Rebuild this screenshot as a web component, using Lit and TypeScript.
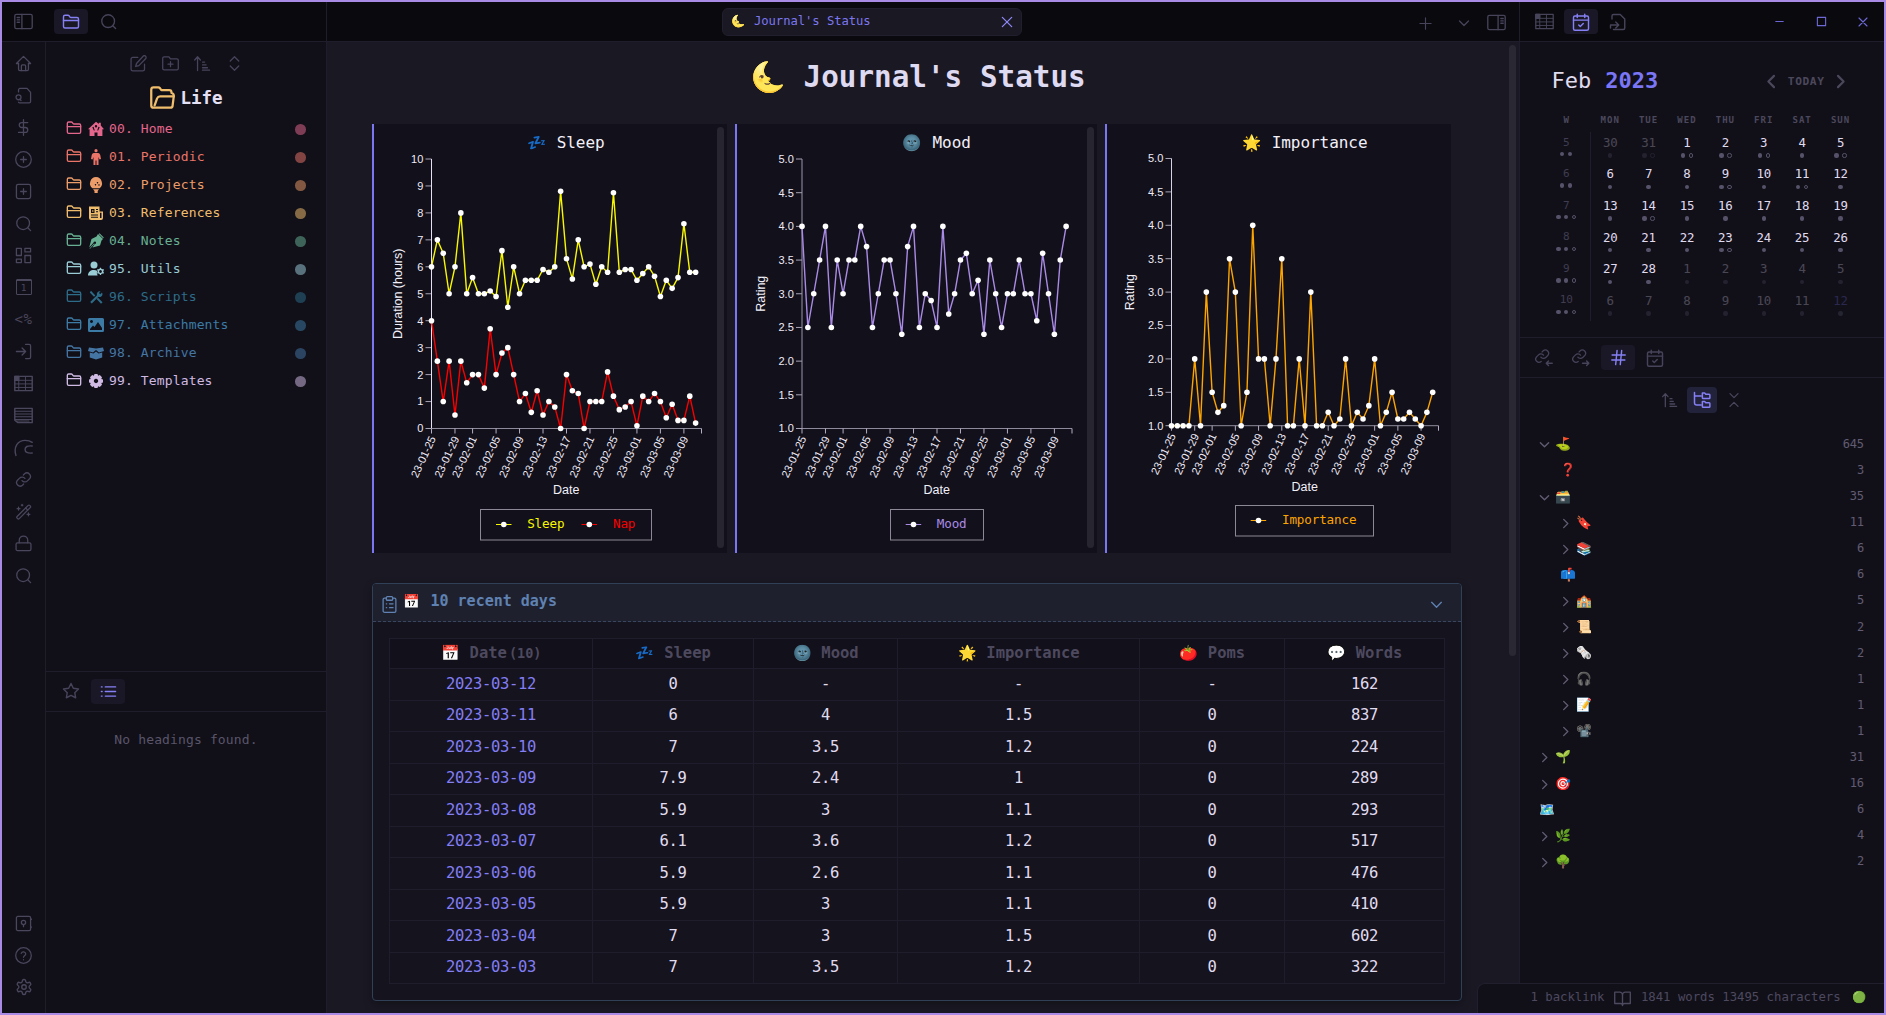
import { LitElement, html, svg, css, nothing } from "lit";
import { customElement, property } from "lit/decorators.js";
import { styleMap } from "lit/directives/style-map.js";
import { classMap } from "lit/directives/class-map.js";

const ICONS: Record<string, unknown> = {
  panelLeft: svg`<rect x="1" y="3" width="22" height="18" rx="2"/><path d="M10 3v18M4 7h3M4 10h3M4 13h3"/>`,
  panelRight: svg`<rect x="1" y="3" width="22" height="18" rx="2"/><path d="M14 3v18M17.5 7h3M17.5 10h3M17.5 13h3"/>`,
  folder: svg`<path d="M4 20h16a2 2 0 0 0 2-2V8a2 2 0 0 0-2-2h-7.93a2 2 0 0 1-1.66-.9l-.82-1.2A2 2 0 0 0 7.93 3H4a2 2 0 0 0-2 2v13c0 1.1.9 2 2 2Z"/><path d="M2 10h20"/>`,
  folderOpen: svg`<path d="M5 19l2.2-6.2A3 3 0 0 1 10 11h12"/><path d="M4 21a2 2 0 0 1-2-2V5a2 2 0 0 1 2-2h4.2a2 2 0 0 1 1.6.8L11 5.500h7a2 2 0 0 1 2 2V8a2.500 2.500 0 0 1 2 3l-1 8a2 2 0 0 1-2 2Z"/>`,
  search: svg`<circle cx="11.500" cy="11.500" r="9"/><path d="m22 22-4-4"/>`,
  home: svg`<path d="M5 12H2L12 2l10 10h-3"/><path d="M5 12v8a2 2 0 0 0 2 2h10a2 2 0 0 0 2-2v-8"/><path d="M9 22v-6.500a1.500 1.500 0 0 1 1.500-1.500h3a1.500 1.500 0 0 1 1.500 1.500V22"/>`,
  fileSearch: svg`<path d="M5 21.500a2 2 0 0 0 1.700 1H20a2 2 0 0 0 2-2V7.500l-5-5.500H7a2 2 0 0 0-2 2v3"/><circle cx="5" cy="14.500" r="3.500"/><path d="m8.500 19-1.700-1.700"/>`,
  dollar: svg`<path d="M12 1v22"/><path d="M18 5H9.500a3.500 3.500 0 0 0 0 7h5a3.500 3.500 0 0 1 0 7H5"/>`,
  plusCircle: svg`<circle cx="12" cy="12" r="11"/><path d="M12 8v8M8 12h8"/>`,
  plusSquare: svg`<rect x="2" y="2" width="20" height="20" rx="2.500"/><path d="M12 8v8M8 12h8"/>`,
  dashboard: svg`<rect x="2" y="2" width="7" height="10"/><rect x="14" y="2" width="8" height="5"/><rect x="14" y="12" width="8" height="10"/><rect x="2" y="17" width="7" height="5"/>`,
  login: svg`<path d="M15 2h5a2 2 0 0 1 2 2v16a2 2 0 0 1-2 2h-5"/><path d="m10 17 5-5-5-5M15 12H2"/>`,
  table: svg`<rect x="1" y="3" width="22" height="18"/><path d="M1 8h22M1 12.500h22M1 17h22M6 3v18M14.500 3v18" stroke-width="1.200"/><path d="M1 3h5v5H1z" fill="currentColor"/>`,
  lines: svg`<path d="M1 3h22v18H5l-4-3z"/><path d="M1 6.500h22M1 10h22M1 13.500h22M1 17h22M3 19h16" stroke-width="1.300"/>`,
  curve: svg`<path d="M2.500 22C-1 11 5 3 14 3c4 0 7 1 9 2.500"/><path d="M23 10c-6-.5-9 1-9 4.500S17 19.500 23 19"/>`,
  link: svg`<path d="M10 13.500a5 5 0 0 0 7.500.5l3-3a5 5 0 0 0-7-7.100l-1.700 1.700"/><path d="M14 10.500a5 5 0 0 0-7.500-.5l-3 3a5 5 0 0 0 7 7.100l1.700-1.700"/>`,
  wand: svg`<path d="M3 19 18.500 3.500a1.700 1.700 0 0 1 2.400 0l.6.6a1.700 1.700 0 0 1 0 2.400L6 22a1.700 1.700 0 0 1-2.400 0l-.6-.6a1.700 1.700 0 0 1 0-2.400Z"/><path d="m15 7 3 3M5 6v4M3 8h4M19 14v4M17 16h4M10 2v2M9 3h2"/>`,
  lock: svg`<rect x="1.500" y="11" width="21" height="11" rx="2"/><path d="M6 11V7.500a6 6 0 0 1 12 0V11"/>`,
  vault: svg`<rect x="2" y="2" width="20" height="20" rx="2"/><circle cx="12" cy="10.500" r="3"/><path d="M12 13.500v3M22 6h1.500M22 17h1.500"/>`,
  help: svg`<circle cx="12" cy="12" r="11"/><path d="M8.800 9a3.300 3.300 0 0 1 6.400 1c0 2.200-3.200 2.500-3.200 4.500M12 18h.01"/>`,
  gear: svg`<path d="M12.220 2h-.44a2 2 0 0 0-2 2v.18a2 2 0 0 1-1 1.730l-.43.25a2 2 0 0 1-2 0l-.15-.08a2 2 0 0 0-2.730.73l-.22.38a2 2 0 0 0 .73 2.730l.15.1a2 2 0 0 1 1 1.720v.51a2 2 0 0 1-1 1.740l-.15.09a2 2 0 0 0-.73 2.730l.22.38a2 2 0 0 0 2.730.73l.15-.08a2 2 0 0 1 2 0l.43.25a2 2 0 0 1 1 1.730V20a2 2 0 0 0 2 2h.44a2 2 0 0 0 2-2v-.18a2 2 0 0 1 1-1.730l.43-.25a2 2 0 0 1 2 0l.15.08a2 2 0 0 0 2.730-.73l.22-.39a2 2 0 0 0-.73-2.730l-.15-.08a2 2 0 0 1-1-1.740v-.5a2 2 0 0 1 1-1.740l.15-.09a2 2 0 0 0 .73-2.730l-.22-.38a2 2 0 0 0-2.730-.73l-.15.08a2 2 0 0 1-2 0l-.43-.25a2 2 0 0 1-1-1.730V4a2 2 0 0 0-2-2z"/><circle cx="12" cy="12" r="3"/>`,
  edit: svg`<path d="M11 3.500H4a2.500 2.500 0 0 0-2.500 2.500v14A2.500 2.500 0 0 0 4 22.500h14a2.500 2.500 0 0 0 2.500-2.500v-7"/><path d="M18.500 1.700a2.300 2.300 0 0 1 3.500 3.500L12.500 15 8 16.200 9.200 12Z"/>`,
  folderPlus: svg`<path d="M3 21h18a2 2 0 0 0 2-2V7.500a2 2 0 0 0-2-2h-9L9.800 2.500H3a2 2 0 0 0-2 2V19a2 2 0 0 0 2 2Z"/><path d="M12 9.500v7M8.500 13h7"/>`,
  sort: svg`<path d="M5 22V3M1 7l4-4.500L9 7M12 10h3M12 14h5M12 18h7M12 21.500h10"/>`,
  expand: svg`<path d="m6 8.500 6-6 6 6M6 15.500l6 6 6-6"/>`,
  collapse: svg`<path d="m6 2.500 6 6 6-6M6 21.500l6-6 6 6"/>`,
  star: svg`<path d="m12 2 3.100 6.300 6.900 1-5 4.900 1.200 6.800-6.200-3.200L5.800 21 7 14.200l-5-4.900 6.900-1Z"/>`,
  list: svg`<path d="M7.500 5.500H22M7.500 12H22M7.500 18.500H22M2 5.500h1M2 12h1M2 18.500h1"/>`,
  calendarCheck: svg`<rect x="2" y="4" width="20" height="19" rx="2"/><path d="M2 9.500h20M7 1.500V6M17 1.500V6M9 16l2 2 4-4"/>`,
  fileOut: svg`<path d="M4 8V4a2 2 0 0 1 2-2h9l6 6v12a2 2 0 0 1-2 2H6"/><path d="M2 16h11M9 12l4 4-4 4M2 16v4"/>`,
  hash: svg`<path d="M3 8.500h18.500M2.500 15.500H21M10 2 8 22M16.500 2l-2 20"/>`,
  linkIn: svg`<g transform="translate(-1 -1) scale(.88)"><path d="M10 13.500a5 5 0 0 0 7.500.5l3-3a5 5 0 0 0-7-7.100l-1.700 1.700"/><path d="M14 10.500a5 5 0 0 0-7.500-.5l-3 3a5 5 0 0 0 7 7.100"/></g><path d="M23 19h-8M18 16l-3 3 3 3"/>`,
  linkOut: svg`<g transform="translate(-1 -1) scale(.88)"><path d="M10 13.500a5 5 0 0 0 7.500.5l3-3a5 5 0 0 0-7-7.100l-1.700 1.700"/><path d="M14 10.500a5 5 0 0 0-7.500-.5l-3 3a5 5 0 0 0 7 7.100"/></g><path d="M14 19h8.500M19.500 16l3 3-3 3"/>`,
  tree: svg`<path d="M2 2v13.500a3 3 0 0 0 3 3h6M2 6.500h9"/><path d="M12.500 2.500h3l1.500 1.700h4.500a1 1 0 0 1 1 1V9a1 1 0 0 1-1 1h-8a1 1 0 0 1-1-1ZM12.500 14h3l1.500 1.700h4.500a1 1 0 0 1 1 1v4a1 1 0 0 1-1 1h-8a1 1 0 0 1-1-1Z"/>`,
  book: svg`<path d="M1 3h7a4 4 0 0 1 4 4v15a3 3 0 0 0-3-3H1zM23 3h-7a4 4 0 0 0-4 4v15a3 3 0 0 1 3-3h8z"/>`,
  clipboard: svg`<rect x="7.500" y="1" width="9" height="5" rx="1.500"/><path d="M16.500 3H19a2 2 0 0 1 2 2v16a2 2 0 0 1-2 2H5a2 2 0 0 1-2-2V5a2 2 0 0 1 2-2h2.500M12 11h5M12 16.500h5M7.500 11h.5M7.500 16.500h.5"/>`,
  plus: svg`<path d="M12 3v18M3 12h18"/>`,
  x: svg`<path d="M4 4l16 16M20 4 4 20"/>`,
  minus: svg`<path d="M2 12h20"/>`,
  square: svg`<path d="M3 3h18v18H3z"/>`,
  down: svg`<path d="m3 8 9 9 9-9"/>`,
  right: svg`<path d="m8 3 9 9-9 9"/>`,
  left: svg`<path d="m16 3-9 9 9 9"/>`,
};

function icon(name: string, size = 18, stroke = 1.9) {
  return html`<svg width=${size} height=${size} viewBox="0 0 24 24" fill="none" stroke="currentColor"
    stroke-width=${stroke} stroke-linecap="round" stroke-linejoin="round">${ICONS[name]}</svg>`;
}

const SOLID: Record<string, unknown> = {
  house: svg`<path fill-rule="evenodd" d="M8 .8 10.800 3V1.800h2v2.800L16 8.200h-1.600V15H9.500v-3.500h-3V15H1.600V8.200H0ZM8 4a1.200 1.200 0 1 0 0 2.400A1.200 1.200 0 0 0 8 4ZM4.300 6.200l1.500 3.300h1L5.600 5.800ZM11.700 6.200l-1.500 3.300h-1l1.200-3.700Z"/>`,
  person: svg`<circle cx="8" cy="1.700" r="1.600"/><path d="M6 4h4c1.500 0 2 1 2.300 2.300L13 10l-1.500.5L10.500 8v8h-2v-4.500h-1V16h-2V8l-1 2.500L3 10l.7-3.700C4 5 4.500 4 6 4Z"/>`,
  bulb: svg`<path fill-rule="evenodd" d="M8 0a6.300 6.300 0 0 1 3.500 11.300H4.500A6.300 6.300 0 0 1 8 0Zm1.500 5a.7.7 0 1 0 .01 0Zm-2 2a.7.7 0 1 0 .01 0Zm3.500.2a.7.7 0 1 0 .01 0Z"/><path d="M5 12.200h6L9.700 14v2H6.500v-2Z"/>`,
  news: svg`<path fill-rule="evenodd" d="M1 1.500h10.500V6.500H15V13a2 2 0 0 1-2 2H3a2 2 0 0 1-2-2Zm2 2.500v4h3.500V4Zm1.200 1.200h1.200v1.600H4.200ZM8 4v1h2V4Zm0 2.200v1h2v-1ZM3 9.500v1h7v-1Zm0 2.200v1h7v-1Zm9-4V13h1.500V7.700Z"/>`,
  pen: svg`<path fill-rule="evenodd" d="m10 1 5 5-1.500 1.500-1.500 5L4.500 14.500 6.800 11A1.300 1.300 0 1 0 5.500 9.800L1.200 14.500 3.500 6 8.500 3.500ZM11.500.2 15.800 4.500l-.7.7L10.800.9Z"/><path d="m1.500 15.500 4.500-5 .6.6-4.600 4.700Z"/>`,
  userGear: svg`<circle cx="6" cy="4" r="3.500"/><path d="M0 14.500C0 11 2.500 9 6 9c1.200 0 2.500.3 3.400.9a4 4 0 0 0 .2 4.600Z"/><path fill-rule="evenodd" d="m12 6.800 1 0 .3 1 1 .5 1-.3.7 1-.7.9v.9l.7.9-.7 1-1-.2-1 .5-.3 1h-1l-.4-1-.9-.5-1 .2-.6-1 .7-.9v-.9l-.7-.9.6-1 1 .3.9-.5Zm.5 2.300a1.400 1.400 0 1 0 .01 0Z"/>`,
  tools: svg`<path d="M3 1.800 7.300 6.600 6 7.800 1.800 3.400ZM10 8.800l4.500 4.400-1.500 1.500-4.400-4.600ZM14.500 5a3 3 0 0 1-4 2.800L3.800 14.600 2.200 13 9 6.300a3 3 0 0 1 3.600-4L11 4l1.200 1.200L14 3.600Z"/>`,
  image: svg`<path fill-rule="evenodd" d="M1.500 1h13A1.500 1.500 0 0 1 16 2.500v11a1.500 1.500 0 0 1-1.500 1.500h-13A1.500 1.500 0 0 1 0 13.500v-11A1.500 1.500 0 0 1 1.500 1ZM3.500 3a1.500 1.500 0 1 0 .01 0ZM2 13h12v-2l-4-6-3.500 5L5 8.500 2 12Z"/>`,
  box: svg`<path d="M1 2.500 8 3.500l7-1L16 6l-5 1.500L8 5 5 7.500 0 6ZM1.800 7.500 5.500 8.500 8 6.500l2.500 2 3.700-1v5L8 14.500l-6.200-2Z"/>`,
  cog: svg`<path fill-rule="evenodd" d="m6.500 1h3l.6 1.700 1.700-.7 2.200 2.200-.7 1.700 1.700.6v3l-1.700.6.7 1.700-2.200 2.200-1.700-.7-.6 1.700h-3l-.6-1.700-1.700.7L2 11.800l.7-1.700L1 9.500v-3l1.700-.6L2 4.200 4.200 2l1.700.7ZM8 5.800a2.200 2.200 0 1 0 .01 0Z"/>`,
};

interface Series { name: string; color: string; values: number[]; lineX: number; textX: number; }
interface ChartSpec {
  card: [number, number]; emoji: string; emojiX: number; title: string; titleX: number;
  x0: number; x1: number; yTop: number; yBase: number; min: number; max: number; step: number; digits: number;
  label: string; labelX: number; dateX: number; dateY: number; box: [number, number, number, number];
  series: Series[]; axis: string;
}

const DATES: [number, string][] = [
  [0, "23-01-25"], [4, "23-01-29"], [7, "23-02-01"], [11, "23-02-05"], [15, "23-02-09"], [19, "23-02-13"],
  [23, "23-02-17"], [27, "23-02-21"], [31, "23-02-25"], [35, "23-03-01"], [39, "23-03-05"], [43, "23-03-09"],
];

const CHARTS: ChartSpec[] = [
  {
    card: [374, 343], emoji: "💤", emojiX: 537, title: "Sleep", titleX: 556.7,
    x0: 431.5, x1: 701.5, yTop: 159, yBase: 428.5, min: 0, max: 10, step: 1, digits: 0,
    label: "Duration (hours)", labelX: 402, dateX: 566.3, dateY: 494, box: [480.5, 509.5, 171, 30.5], axis: "#e6e0f5",
    series: [
      { name: "Sleep", color: "#f8f800", lineX: 496, textX: 527.2, values: [6, 7, 6.5, 5, 6, 8, 5, 5.6, 5, 5, 5.1, 4.9, 6.6, 4.5, 6, 5, 5.5, 5.5, 5.5, 5.9, 5.8, 6, 8.8, 6.3, 5.55, 7, 6, 6.1, 5.35, 6, 5.8, 8.75, 5.8, 5.9, 5.9, 5.5, 5.75, 6, 5.65, 4.9, 5.5, 5.2, 5.6, 7.6, 5.8, 5.8] },
      { name: "Nap", color: "#f80000", lineX: 581.5, textX: 613, values: [4, 2.5, 1, 2.5, 0.5, 2.5, 1.7, 2, 2, 1.5, 3.7, 2, 2.8, 3, 2, 1, 1.3, 0.6, 1.4, 0.5, 1, 0.8, 0, 2, 1.4, 1.3, 0, 1, 1, 1, 2.1, 1.2, 0.7, 0.8, 1, 0.1, 1.2, 1, 1.3, 1, 0.4, 0.9, 0.3, 0.3, 1.2, 0.2] },
    ],
  },
  {
    card: [737, 350], emoji: "🌚", emojiX: 912, title: "Mood", titleX: 932.5,
    x0: 802, x1: 1072, yTop: 159, yBase: 428.5, min: 1, max: 5, step: 0.5, digits: 1,
    label: "Rating", labelX: 765, dateX: 936.7, dateY: 494, box: [890.5, 509.5, 93, 30.5], axis: "#9d95ad",
    series: [
      { name: "Mood", color: "#a98be6", lineX: 905.7, textX: 936.8, values: [4, 2.5, 3, 3.5, 4, 2.5, 3.5, 3, 3.5, 3.5, 4, 3.7, 2.5, 3, 3.5, 3.5, 3, 2.4, 3.7, 4, 2.5, 3, 2.9, 2.5, 4, 2.7, 3, 3.5, 3.6, 3, 3.2, 2.4, 3.5, 3, 2.5, 3, 3, 3.5, 3, 3, 2.6, 3.6, 3, 2.4, 3.5, 4] },
    ],
  },
  {
    card: [1107, 344], emoji: "🌟", emojiX: 1252, title: "Importance", titleX: 1271.7,
    x0: 1171.5, x1: 1438.5, yTop: 158.5, yBase: 425.7, min: 1, max: 5, step: 0.5, digits: 1,
    label: "Rating", labelX: 1134, dateX: 1304.7, dateY: 491, box: [1235.5, 505.5, 138, 30.5], axis: "#d8d2e6",
    series: [
      { name: "Importance", color: "#fca400", lineX: 1250.7, textX: 1282, values: [1, 1, 1, 1, 2, 1, 3, 1.5, 1.2, 1.3, 3.5, 3, 1, 1.5, 4, 2, 2, 1, 2, 3.5, 1, 1, 2, 1, 3, 1, 1, 1.2, 1, 1.1, 2, 1, 1.2, 1.1, 1.3, 2, 1, 1.2, 1.5, 1.1, 1.1, 1.2, 1.1, 1, 1.2, 1.5] },
    ],
  },
];

@customElement("line-chart")
class LineChart extends LitElement {
  @property({ attribute: false }) spec!: ChartSpec;

  static styles = css`
    :host { display: block; height: 429px; }
    svg { display: block; }
    .title { font: 16px "DejaVu Sans Mono", monospace; fill: #f3f0fa; letter-spacing: -0.05px; }
    .emoji { font: 15.5px "Noto Color Emoji", sans-serif; text-anchor: middle; }
    .legend { font: 12.6px "DejaVu Sans Mono", monospace; letter-spacing: -0.15px; }
    .num { font: 11px "Liberation Sans", Arial, sans-serif; fill: #efebf8; text-anchor: end; }
    .label { font: 12.5px "Liberation Sans", Arial, sans-serif; fill: #f3f0fa; text-anchor: middle; }
    .box { fill: none; stroke: #8c8896; stroke-width: 1; }
  `;

  render() {
    const s = this.spec;
    const x = (i: number) => s.x0 + ((s.x1 - s.x0) * i) / 46;
    const y = (v: number) => s.yBase - ((s.yBase - s.yTop) * (v - s.min)) / (s.max - s.min);
    const count = Math.round((s.max - s.min) / s.step);
    const ticks = Array.from({ length: count + 1 }, (_, i) => s.min + i * s.step);
    const dotY = s.box[1] + 15;
    return html`<svg width=${s.card[1]} height="429" viewBox="${s.card[0]} 124 ${s.card[1]} 429">
      <text class="emoji" x=${s.emojiX} y="148">${s.emoji}</text>
      <text class="title" x=${s.titleX} y="148">${s.title}</text>
      ${ticks.map((t) => svg`
        <path d="M${s.x0 - 6} ${y(t)}H${s.x0}" stroke="#a9a3b6"/>
        <text class="num" x=${s.x0 - 8.2} y=${y(t) + 3.9}>${t.toFixed(s.digits)}</text>`)}
      <path d="M${s.x0} ${s.yTop}V${s.yBase}" stroke=${s.axis}/>
      <path d="M${s.x0} ${s.yBase}H${s.x1}" stroke="#8f899c"/>
      ${[...DATES.map((d) => d[0]), 46].map((i) => svg`<path d="M${x(i)} ${s.yBase}v5" stroke="#b5aec4"/>`)}
      ${DATES.map(([i, d]) => svg`<text class="num" transform="translate(${x(i) + 4.6} ${s.yBase + 10}) rotate(-65)">${d}</text>`)}
      <text class="label" transform="translate(${s.labelX} ${(s.yTop + s.yBase) / 2}) rotate(-90)">${s.label}</text>
      <text class="label" x=${s.dateX} y=${s.dateY}>Date</text>
      ${s.series.map((r) => svg`
        <polyline points=${r.values.map((v, i) => `${x(i)},${y(v)}`).join(" ")} fill="none" stroke=${r.color} stroke-width="1.4"/>
        ${r.values.map((v, i) => svg`<circle cx=${x(i)} cy=${y(v)} r="2.8" fill="#fff"/>`)}`)}
      <rect class="box" x=${s.box[0]} y=${s.box[1]} width=${s.box[2]} height=${s.box[3]}/>
      ${s.series.map((r) => svg`
        <path d="M${r.lineX} ${dotY}h15.500" stroke=${r.color}/>
        <circle cx=${r.lineX + 7.8} cy=${dotY} r="2.800" fill="#fff"/>
        <text class="legend" x=${r.textX} y=${dotY + 3.6} fill=${r.color}>${r.name}</text>`)}
    </svg>`;
  }
}

const TREE = [
  ["house", "00. Home", "#e5668c"], ["person", "01. Periodic", "#ea7468"], ["bulb", "02. Projects", "#ec9c68"],
  ["news", "03. References", "#f0bd6d"], ["pen", "04. Notes", "#68b093"], ["userGear", "95. Utils", "#9accd6"],
  ["tools", "96. Scripts", "#2d6c89"], ["image", "97. Attachments", "#3c7ba5"], ["box", "98. Archive", "#4475a3"],
  ["cog", "99. Templates", "#cfbae3"],
];

const RIBBON = ["home", "fileSearch", "dollar", "plusCircle", "plusSquare", "search", "dashboard", "day", "tpl", "login", "table", "lines", "curve", "link", "wand", "lock", "search"];

const WEEKS: { n: number; dots: string; days: [number, string][] }[] = [
  { n: 5, dots: "ff", days: [[30, "f"], [31, "fo"], [1, "fo"], [2, "fo"], [3, "fo"], [4, "f"], [5, "fo"]] },
  { n: 6, dots: "ff", days: [[6, "f"], [7, "f"], [8, "f"], [9, "fo"], [10, "f"], [11, "fo"], [12, "f"]] },
  { n: 7, dots: "ffo", days: [[13, "f"], [14, "fo"], [15, "f"], [16, "f"], [17, "f"], [18, "f"], [19, "f"]] },
  { n: 8, dots: "ffo", days: [[20, "f"], [21, "f"], [22, "f"], [23, "fo"], [24, "f"], [25, "f"], [26, "f"]] },
  { n: 9, dots: "ffo", days: [[27, "f"], [28, "f"], [1, "f"], [2, "f"], [3, "f"], [4, "f"], [5, "f"]] },
  { n: 10, dots: "ffo", days: [[6, "f"], [7, "f"], [8, "f"], [9, "f"], [10, "f"], [11, "f"], [12, "f"]] },
];

// [level, chevron, emoji, count]
const TAGS: [number, string, string, number][] = [
  [0, "down", "⛳", 645], [1, "", "❓", 3], [0, "down", "🗃️", 35], [1, "right", "🔖", 11], [1, "right", "📚", 6],
  [1, "", "📫", 6], [1, "right", "🏫", 5], [1, "right", "📜", 2], [1, "right", "🗞️", 2], [1, "right", "🎧", 1],
  [1, "right", "📝", 1], [1, "right", "📽️", 1], [0, "right", "🌱", 31], [0, "right", "🎯", 16], [0, "", "🗺️", 6],
  [0, "right", "🌿", 4], [0, "right", "🌳", 2],
];

const ROWS = [
  ["2023-03-12", "0", "-", "-", "-", "162"], ["2023-03-11", "6", "4", "1.5", "0", "837"],
  ["2023-03-10", "7", "3.5", "1.2", "0", "224"], ["2023-03-09", "7.9", "2.4", "1", "0", "289"],
  ["2023-03-08", "5.9", "3", "1.1", "0", "293"], ["2023-03-07", "6.1", "3.6", "1.2", "0", "517"],
  ["2023-03-06", "5.9", "2.6", "1.1", "0", "476"], ["2023-03-05", "5.9", "3", "1.1", "0", "410"],
  ["2023-03-04", "7", "3", "1.5", "0", "602"], ["2023-03-03", "7", "3.5", "1.2", "0", "322"],
];
const HEADS = [["📅", "Date"], ["💤", "Sleep"], ["🌚", "Mood"], ["🌟", "Importance"], ["🍅", "Poms"], ["💬", "Words"]];

@customElement("app-root")
class AppRoot extends LitElement {
  static styles = css`
    :host { display: block; }
    * { box-sizing: border-box; }
    svg { display: block; flex: none; }
    .window {
      position: relative; width: 1886px; height: 1015px; overflow: hidden; border: 2px solid #a98be6;
      display: grid; grid-template-columns: 325px 1192px 365px; grid-template-rows: 40px 971px;
      background: #1a1823; color: #e0dcf0; white-space: nowrap;
      font-family: "DejaVu Sans Mono", "Liberation Mono", monospace;
    }
    .emoji { font-family: "Noto Color Emoji", sans-serif; display: inline-flex; justify-content: center; letter-spacing: 0; flex: none; font-weight: 400; }
    .head { background: #09090e; border-bottom: 1px solid #1f1d2c; display: flex; align-items: flex-start; color: #47435a; }
    .head.l { border-right: 1px solid #1f1d2c; padding: 7px 0 0 4.500px; gap: 3px; }
    .head.r { border-left: 1px solid #1f1d2c; padding: 7px 0 0 7px; gap: 3px; }
    .cell { width: 34px; height: 25px; border-radius: 4px; display: flex; align-items: center; justify-content: center; flex: none; }
    .cell.on { background: #1a1827; color: #8580f5; }
    .l .first { margin-right: 10.500px; }
    .wins { display: flex; margin-left: auto; color: #6f69d8; height: 25px; align-items: center; }
    .win { width: 42px; display: flex; justify-content: center; }
    .head.m { padding: 6px 0 0 395px; }
    .tab { width: 300px; height: 28px; border-radius: 6px; background: #1a1823; border: 1px solid #211f2d; display: flex; align-items: center; padding: 0 7px 2px 9px; color: #7c77ee; font-size: 12.2px; letter-spacing: -0.05px; line-height: 24px; }
    .tab .emoji { width: 14px; font-size: 11.5px; margin-right: 8px; }
    .tab .x { margin-left: auto; margin-top: 2px; color: #8d88f5; }
    .mh { display: flex; align-items: center; height: 30px; margin-left: 396px; margin-top: 0; gap: 25px; }
    .mh svg:last-child { margin: -2px 0 0 -8px; }
    .body { display: flex; }
    .ribbon { width: 44px; background: #111019; border-right: 1px solid #1f1d2c; color: #4a465c; display: flex; flex-direction: column; padding: 5px 0 10px; }
    .rb { height: 32px; display: flex; align-items: center; justify-content: center; }
    .tpl { font-size: 14px; letter-spacing: .6px; }
    .day { width: 16px; height: 16px; border: 1.2px solid currentColor; border-radius: 1px; font-size: 9.500px; display: flex; align-items: center; justify-content: center; box-shadow: inset 0 2px 0 -1px currentColor; }
    .push { margin-top: auto; }
    .side { width: 281px; background: #111019; border-right: 1px solid #1f1d2c; }
    .tools { display: flex; justify-content: center; color: #47435a; height: 42px; align-items: center; }
    .tools .t { width: 32px; display: flex; justify-content: center; }
    .life { display: flex; align-items: center; height: 26px; margin: 0 0 4px 103px; color: #f0bd6d; }
    .life b { font-size: 17.5px; color: #e4e0f5; margin-left: 4.500px; margin-top: 1px; letter-spacing: 0; }
    .row { display: flex; align-items: center; height: 28px; padding: 0 20px 0 20px; font-size: 13px; letter-spacing: .14px; }
    .row .solid { margin: 1px 5px 0 6px; }
    .dot { width: 10.6px; height: 10.6px; border-radius: 50%; margin-left: auto; margin-top: 3px; opacity: .52; }
    .filetop { height: 629.600px; border-bottom: 1px solid #1f1d2c; }
    .tabs { height: 40px; display: flex; align-items: center; gap: 3px; padding-left: 8px; color: #47435a; border-bottom: 1px solid #1f1d2c; }
    .right .tabs { padding-left: 7px; }
    .none { text-align: center; color: #5a5569; font-size: 13px; letter-spacing: .14px; padding: 19px 0 0 0; line-height: 18px; }

    .main { padding-left: 45px; }
    .title { display: flex; align-items: center; height: 82px; padding: 0 0 12px 378.500px; font-size: 29.3px; font-weight: 700; line-height: 70px; color: #dedaf2; }
    .title .emoji { width: 36px; font-size: 29px; line-height: 66px; margin-right: 17px; }
    .charts { display: grid; grid-template-columns: 355px 362px 346px; column-gap: 8px; }
    .card { background: #12101a; border-left: 2px solid #7b76f2; height: 429px; display: flex; }
    .bar { width: 7px; height: 421px; margin-top: 3px; border-radius: 4px; background: #272530; }
    .callout { margin-top: 30px; width: 1090px; height: 418px; border: 1px solid #304057; border-radius: 4px; background: #15131e; box-shadow: 0 3px 8px rgba(0,0,0,.3); overflow: hidden; }
    .chead { height: 38px; background: #1e202e; border-bottom: 1px dashed #3a4660; display: flex; align-items: center; padding: 0 18.500px 0 8px; color: #5f82b2; }
    .chead b { font-size: 15px; line-height: 20px; margin: -4px 0 0 10.500px; }
    .chead .emoji { width: 16px; font-size: 13.5px; margin: -4px 0 0 6px; }
    .chead .clip { margin-top: 3px; }
    .chead .chev { margin-left: auto; margin-top: 3px; }
    .table { margin: 16px 0 0 16px; width: 1056px; border-left: 1px solid #1f1d2c; border-top: 1px solid #1f1d2c; display: grid; grid-template-columns: 203px 161px 144px 242px 145px 160px; grid-template-rows: 30px repeat(10, 31.5px); }
    .td { border-right: 1px solid #1f1d2c; border-bottom: 1px solid #1f1d2c; display: flex; align-items: center; justify-content: center; font-size: 15.500px; letter-spacing: -.35px; padding-bottom: 1px; }
    .td.link { color: #837ef4; }
    .td.th { background: #12101a; color: #4d495f; font-weight: 700; font-size: 15.500px; letter-spacing: 0; }
    .th .emoji { width: 20px; font-size: 15px; margin-right: 9px; }
    .th small { font-size: 13.500px; margin-left: 2px; }
    .mainbar { position: absolute; left: 1507px; top: 43px; width: 7px; height: 611px; border-radius: 4px; background: #2a2833; }

    .right { background: #111019; border-left: 1px solid #1f1d2c; }
    .cal { height: 296px; border-bottom: 1px solid #1f1d2c; padding-left: 22.600px; }
    .month { height: 67px; display: flex; align-items: center; padding: 10px 36px 0 9px; font-size: 22px; line-height: 30px; }
    .month .yr { color: #7b76f5; font-weight: 700; margin-left: 13.800px; }
    .nav { margin-left: auto; display: flex; align-items: center; font-size: 11.2px; font-weight: 700; letter-spacing: .6px; margin-top: 2px; gap: 8.500px; line-height: 14px; color: #4c485c; }
    .grid { display: grid; grid-template-columns: 48.4px repeat(7, 38.4px); }
    .dh { height: 22.500px; display: flex; justify-content: center; align-items: center; font-size: 9px; font-weight: 700; color: #4c485c; letter-spacing: 1px; }
    .d { height: 31.6px; display: flex; flex-direction: column; align-items: center; font-size: 12.4px; letter-spacing: -.2px; line-height: 14px; padding-top: 4.400px; }
    .d.out { opacity: .27; }
    .d.today { opacity: 1; color: #2b2850; }
    .d.w { border-right: 1px solid #1f1d2c; font-size: 11px; color: #403d50; padding-top: 4px; line-height: 13px; }
    .dots { display: flex; gap: 3.600px; margin-top: 3.300px; }
    .dots i { width: 4.400px; height: 4.400px; border-radius: 50%; background: #575269; }
    .dots i.o { background: none; border: 1px solid #575269; }
    .today .dots { opacity: .3; }
    .rt { height: 43px; display: flex; justify-content: center; align-items: center; gap: 2px; color: #4a465c; }
    .rt .cell { width: 30px; height: 26px; }
    .rt .on { background: #22223a; }
    .tags { padding-top: 9.800px; }
    .tag { height: 26.1px; display: flex; align-items: center; padding: 0 20px 0 19px; font-size: 12px; color: #615c72; }
    .tag.l1 { padding-left: 40px; }
    .tag .chv { width: 16px; margin-top: 2px; }
    .tag .emoji { width: 16px; font-size: 12.8px; }
    .tag .n { margin-left: auto; letter-spacing: -.1px; }
    .status { position: absolute; right: 0; bottom: 0; width: 407px; height: 30px; border-top: 1px solid #211f2e; border-left: 1px solid #211f2e; border-top-left-radius: 8px; background: #111019; color: #4d495f; display: flex; align-items: center; padding: 0 17px 3px 52.500px; font-size: 12.3px; letter-spacing: -.01px; }
    .status .bk { margin: 2px 9.500px 0 10px; }
    .status .emoji { font-size: 11.500px; margin-left: auto; width: 15px; }
  `;

  private dots(kinds: string) {
    return html`<div class="dots">${[...kinds].map((k) => html`<i class=${k}></i>`)}</div>`;
  }

  private ribbonItem(name: string) {
    if (name === "tpl") return html`<div class="rb"><span class="tpl">&lt;%</span></div>`;
    if (name === "day") return html`<div class="rb"><div class="day">1</div></div>`;
    return html`<div class="rb">${icon(name, name === "table" || name === "lines" || name === "curve" ? 19 : 17, 1.8)}</div>`;
  }

  private renderHeader() {
    return html`
      <div class="head l">
        <div class="cell first">${icon("panelLeft", 19, 1.7)}</div>
        <div class="cell on">${icon("folder", 18)}</div>
        <div class="cell">${icon("search", 17)}</div>
      </div>
      <div class="head m">
        <div class="tab"><span class="emoji">🌜</span>Journal's Status<span class="x">${icon("x", 14, 2.2)}</span></div>
        <div class="mh">${icon("plus", 15, 1.8)}${icon("down", 12, 2.6)}${icon("panelRight", 19, 1.7)}</div>
      </div>
      <div class="head r">
        <div class="cell">${icon("table", 19, 1.6)}</div>
        <div class="cell on">${icon("calendarCheck", 18)}</div>
        <div class="cell">${icon("fileOut", 18)}</div>
        <div class="wins">
          <div class="win">${icon("minus", 9, 2.6)}</div><div class="win">${icon("square", 11, 2.400)}</div><div class="win">${icon("x", 12, 2.200)}</div>
        </div>
      </div>`;
  }

  private renderLeft() {
    return html`<div class="body">
      <div class="ribbon">
        ${RIBBON.map((n) => this.ribbonItem(n))}
        <div class="rb push">${icon("vault", 17, 1.8)}</div>
        <div class="rb">${icon("help", 17, 1.8)}</div>
        <div class="rb">${icon("gear", 18, 1.8)}</div>
      </div>
      <div class="side">
        <div class="filetop">
          <div class="tools">${["edit", "folderPlus", "sort", "expand"].map((n) => html`<div class="t">${icon(n, 17, 1.8)}</div>`)}</div>
          <div class="life">${icon("folderOpen", 27, 2)}<b>Life</b></div>
          ${TREE.map(([ic, label, color]) => html`
            <div class="row" style=${styleMap({ color })}>
              ${icon("folder", 16, 2)}
              <svg class="solid" width="16" height="16" viewBox="0 0 16 16" fill="currentColor">${SOLID[ic]}</svg>${label}
              <span class="dot" style=${styleMap({ background: color })}></span>
            </div>`)}
        </div>
        <div class="tabs"><div class="cell">${icon("star", 18)}</div><div class="cell on">${icon("list", 17, 2)}</div></div>
        <div class="none">No headings found.</div>
      </div>
    </div>`;
  }

  private renderMain() {
    return html`<div class="main">
      <div class="title"><span class="emoji">🌜</span>Journal's Status</div>
      <div class="charts">
        ${CHARTS.map((spec, i) => html`<div class="card"><line-chart .spec=${spec}></line-chart>${i < 2 ? html`<div class="bar"></div>` : nothing}</div>`)}
      </div>
      <div class="callout">
        <div class="chead"><span class="clip">${icon("clipboard", 17, 1.8)}</span><span class="emoji">📅</span><b>10 recent days</b><span class="chev">${icon("down", 13, 2.4)}</span></div>
        <div class="table">
          ${HEADS.map(([e, t], i) => html`<div class="td th"><span class="emoji">${e}</span>${t}${i === 0 ? html`<small>(10)</small>` : nothing}</div>`)}
          ${ROWS.map((r) => r.map((c, i) => html`<div class=${classMap({ td: true, link: i === 0 })}>${c}</div>`))}
        </div>
      </div>
    </div>`;
  }

  private renderRight() {
    return html`<div class="right">
      <div class="cal">
        <div class="month"><span>Feb</span><span class="yr">2023</span>
          <div class="nav">${icon("left", 15, 3.400)}<span>TODAY</span>${icon("right", 15, 3.400)}</div></div>
        <div class="grid">
          ${["W", "MON", "TUE", "WED", "THU", "FRI", "SAT", "SUN"].map((h) => html`<div class="dh">${h}</div>`)}
          ${WEEKS.map((w, wi) => html`
            <div class="d w">${w.n}${this.dots(w.dots)}</div>
            ${w.days.map(([n, k], di) => {
              const out = (wi === 0 && di < 2) || (wi === 4 && di > 1) || wi === 5;
              return html`<div class=${classMap({ d: true, out, today: wi === 5 && di === 6 })}>${n}${this.dots(k)}</div>`;
            })}`)}
        </div>
      </div>
      <div class="tabs">
        <div class="cell">${icon("linkIn", 18)}</div><div class="cell">${icon("linkOut", 18)}</div>
        <div class="cell on">${icon("hash", 17, 2)}</div><div class="cell">${icon("calendarCheck", 18)}</div>
      </div>
      <div class="rt"><div class="cell">${icon("sort", 16)}</div><div class="cell on">${icon("tree", 18, 2)}</div><div class="cell">${icon("collapse", 16)}</div></div>
      <div class="tags">
        ${TAGS.map(([level, chev, e, n]) => html`
          <div class=${classMap({ tag: true, l1: level === 1 })}>${chev ? html`<span class="chv">${icon(chev, 11, 3)}</span>` : nothing}<span class="emoji">${e}</span><span class="n">${n}</span></div>`)}
      </div>
    </div>`;
  }

  render() {
    return html`<div class="window">
      ${this.renderHeader()}${this.renderLeft()}${this.renderMain()}${this.renderRight()}
      <div class="mainbar"></div>
      <div class="status">1 backlink<span class="bk">${icon("book", 17, 1.9)}</span>1841 words 13495 characters<span class="emoji">🟢</span></div>
    </div>`;
  }
}
